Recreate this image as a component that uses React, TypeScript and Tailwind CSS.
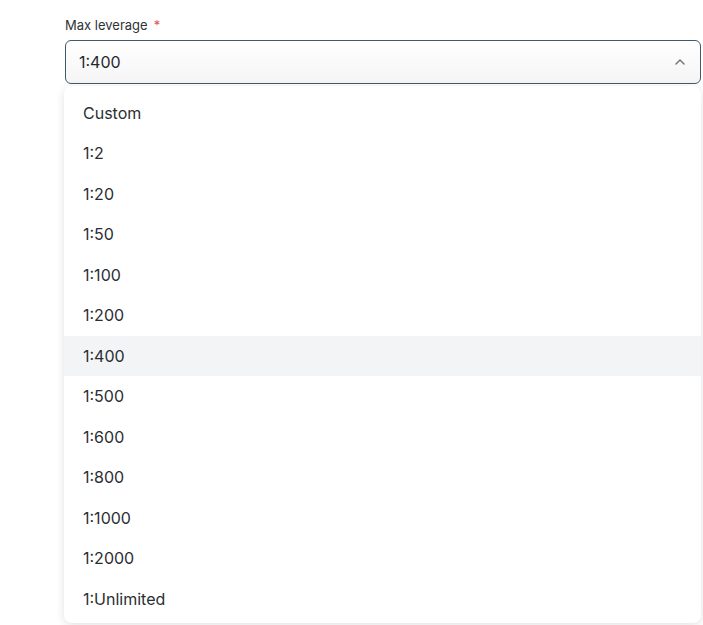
import React from "react";

const items = [
  "Custom",
  "1:2",
  "1:20",
  "1:50",
  "1:100",
  "1:200",
  "1:400",
  "1:500",
  "1:600",
  "1:800",
  "1:1000",
  "1:2000",
  "1:Unlimited",
];

export default function App() {
  return (
    <div
      className="relative w-[703px] h-[625px] bg-white overflow-hidden"
      style={{ fontFamily: "Inter, 'Noto Sans', sans-serif" }}
    >
      <div className="pl-[65px] pr-[2px] pt-[16px]">
        <div className="text-[13px] leading-[18px] text-[#2f3337] flex items-center">
          <span>Max leverage</span>
          <span className="ml-[6px] text-[#d9534f]">*</span>
        </div>
        <div className="mt-[6px] h-[44px] rounded-[6px] border border-[#3e5a6c] bg-gradient-to-b from-white to-[#f5f5f5] flex items-center justify-between pl-[13px] pr-[14px]">
          <span className="text-[16px] text-[#25292d]">1:400</span>
          <svg width="12" height="8" viewBox="0 0 12 8" fill="none">
            <path d="M2 6 L6 2 L10 6" stroke="#6b6f73" strokeWidth="1.4" strokeLinecap="round" strokeLinejoin="round" />
          </svg>
        </div>
        <div className="mt-[492px] flex flex-col items-end gap-[4px] text-[12px] leading-[16px] text-[#888] -mr-[6px]">
          <span>i</span>
          <span>:</span>
        </div>
      </div>

      <div className="absolute left-[64px] top-[86px] w-[637px] h-[537px] rounded-[8px] bg-white shadow-[0_2px_10px_rgba(0,0,0,0.12)] pt-[6.5px]">
        {items.map((it) => (
          <div
            key={it}
            className={`h-[40.5px] flex items-center pl-[19px] text-[16px] text-[#2a2e33] ${
              it === "1:400" ? "bg-[#f3f4f6]" : ""
            }`}
          >
            {it}
          </div>
        ))}
      </div>
    </div>
  );
}
